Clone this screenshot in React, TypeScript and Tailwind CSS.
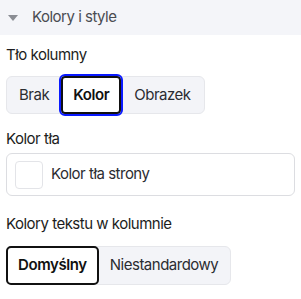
import React from "react";

export default function App() {
  const font = { fontFamily: "Inter, 'Noto Sans', sans-serif" };
  return (
    <div className="w-[301px] h-[299px] bg-white overflow-hidden" style={font}>
      <div className="h-[35px] bg-[#f4f5f9] flex items-center pl-[8px] gap-[14px]">
        <svg width="10" height="6" viewBox="0 0 10 6">
          <path d="M0 0 L10 0 L5 6 Z" fill="#8a8d94" />
        </svg>
        <span className="text-[15px] text-[#4a4c52] tracking-[-0.5px]">Kolory i style</span>
      </div>
      <div className="px-[6px]">
        <div className="mt-[10px] text-[15px] text-[#1c1d21] tracking-[-0.5px] leading-[20px]">Tło kolumny</div>
        <div className="mt-[11px] flex w-fit h-[38px] rounded-[6px] border border-[#e6e7eb] bg-[#f3f4f8] items-stretch">
          <button className="px-[12px] text-[15px] text-[#2b2c31] tracking-[-0.5px]">Brak</button>
          <button className="px-[10px] -my-px text-[15px] font-semibold text-[#111] bg-white border-2 border-[#111] rounded-[4px] outline-2 outline-[#0a1aff] tracking-[-0.4px]">Kolor</button>
          <button className="px-[13px] text-[15px] text-[#2b2c31] tracking-[-0.5px]">Obrazek</button>
        </div>
        <div className="mt-[15px] text-[15px] text-[#1c1d21] tracking-[-0.5px] leading-[20px]">Kolor tła</div>
        <div className="mt-[4px] h-[43px] w-[289px] rounded-[6px] border border-[#dcdde1] flex items-center pl-[8px] gap-[8px]">
          <div className="w-[28px] h-[28px] rounded-[4px] border border-[#e3e4e8] bg-white" />
          <span className="text-[15px] text-[#2b2c31] tracking-[-0.5px]">Kolor tła strony</span>
        </div>
        <div className="mt-[18px] text-[15px] text-[#1c1d21] tracking-[-0.5px] leading-[20px]">Kolory tekstu w kolumnie</div>
        <div className="mt-[12px] flex w-fit h-[39px] rounded-[6px] border border-[#e6e7eb] bg-[#f3f4f8] items-stretch">
          <button className="px-[10px] -m-px text-[15px] font-semibold text-[#111] bg-white border-2 border-[#111] rounded-[5px] tracking-[-0.4px]">Domyślny</button>
          <button className="px-[12px] text-[15px] text-[#2b2c31] tracking-[-0.5px]">Niestandardowy</button>
        </div>
      </div>
    </div>
  );
}
